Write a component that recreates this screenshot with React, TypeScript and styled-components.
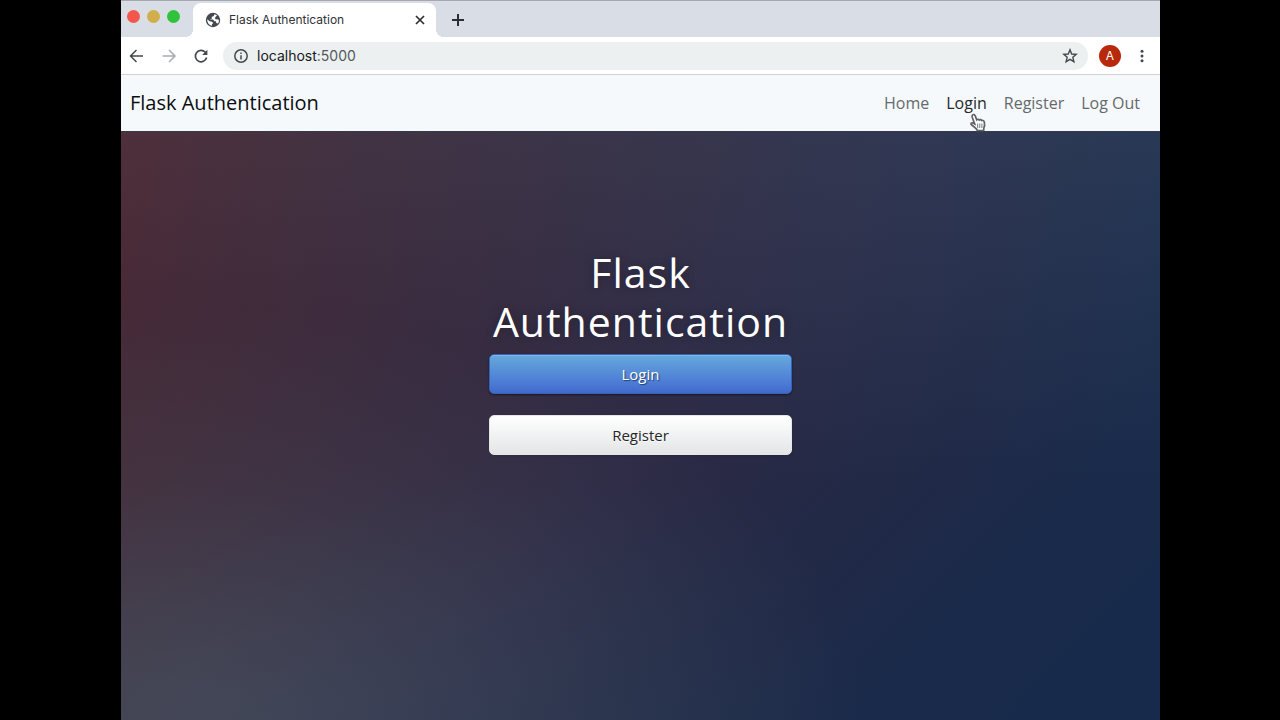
import React from "react";
import styled, { createGlobalStyle } from "styled-components";

const GlobalStyle = createGlobalStyle`
  *, *::before, *::after { box-sizing: border-box; }
  body { margin: 0; background: #000; }
  button { font: inherit; cursor: pointer; }
`;

const Stage = styled.div`
  display: flex;
  min-height: 100vh;
  padding: 0 120px 0 121px;
  background: #000;
`;

const BrowserWindow = styled.div`
  flex: 1;
  min-width: 0;
  display: flex;
  flex-direction: column;
  font-family: Inter, "Liberation Sans", sans-serif;
`;

const TabStrip = styled.div`
  display: flex;
  align-items: flex-end;
  height: 37px;
  background: #d9dde5;
  border-top: 1px solid #a5a8b0;
`;

const WindowControls = styled.div`
  display: flex;
  align-self: flex-start;
  gap: 7px;
  width: 72px;
  padding: 9px 0 0 6px;
`;

const WindowControl = styled.button<{ $color: string }>`
  width: 13px;
  height: 13px;
  padding: 0;
  border: 0;
  border-radius: 50%;
  background: ${(p) => p.$color};
`;

const Tab = styled.div`
  position: relative;
  display: flex;
  align-items: center;
  width: 243px;
  height: 34px;
  padding: 0 8px 0 12px;
  border-radius: 8px 8px 0 0;
  background: #fff;

  &::before,
  &::after {
    content: "";
    position: absolute;
    bottom: 0;
    width: 8px;
    height: 8px;
  }
  &::before {
    right: 100%;
    background: radial-gradient(circle at 0 0, transparent 8px, #fff 8px);
  }
  &::after {
    left: 100%;
    background: radial-gradient(circle at 100% 0, transparent 8px, #fff 8px);
  }
`;

const TabTitle = styled.span`
  flex: 1;
  padding-left: 8px;
  color: #303337;
  font-size: 12px;
  line-height: 16px;
  white-space: nowrap;
`;

const IconButton = styled.button`
  display: flex;
  align-items: center;
  justify-content: center;
  width: 16px;
  height: 16px;
  padding: 0;
  border: 0;
  background: none;
  color: #45484d;
`;

const CloseTabButton = styled(IconButton)`
  color: #2b2e33;
`;

const NewTabButton = styled(CloseTabButton)`
  align-self: center;
  margin: 2px 0 0 14px;
`;

const Toolbar = styled.div`
  display: flex;
  align-items: center;
  height: 38px;
  padding: 0 10px 0 8px;
  background: #fff;
  border-bottom: 1px solid #d0d3d6;
`;

const HistoryButtons = styled.div`
  display: flex;
  gap: 16px;
  margin-right: 14px;
`;

const AddressBar = styled.div`
  flex: 1;
  display: flex;
  align-items: center;
  height: 28px;
  padding: 0 10px;
  border-radius: 14px;
  background: #ecf0f1;
`;

const Address = styled.div`
  flex: 1;
  padding-left: 8px;
  color: #54585c;
  font-size: 14px;
  line-height: 20px;
`;

const Host = styled.span`
  color: #16181b;
`;

const Avatar = styled.button`
  width: 22px;
  height: 22px;
  margin: 0 13px 0 11px;
  padding: 0;
  border: 0;
  border-radius: 50%;
  background: #b7290a;
  color: #fff;
  font-size: 12px;
  line-height: 22px;
`;

const Page = styled.div`
  flex: 1;
  display: flex;
  flex-direction: column;
  font-family: "Open Sans", "Noto Sans", sans-serif;
`;

const Navbar = styled.nav`
  display: flex;
  align-items: center;
  justify-content: space-between;
  height: 56px;
  padding: 0 20px 0 9px;
  background: #f5f9fc;
`;

const Brand = styled.a`
  color: #0c0d0f;
  font-size: 20px;
  line-height: 30px;
  text-decoration: none;
`;

const NavLinks = styled.div`
  display: flex;
  gap: 17px;
`;

const NavLink = styled.a<{ $active?: boolean }>`
  position: relative;
  color: ${(p) => (p.$active ? "#27282a" : "#66696c")};
  font-size: 16px;
  line-height: 24px;
  text-decoration: none;
`;

const Pointer = styled.svg`
  position: absolute;
  top: 22px;
  left: 23px;
  width: 18px;
  height: 20px;
`;

const Hero = styled.main`
  flex: 1;
  display: flex;
  flex-direction: column;
  align-items: center;
  padding: 116px 20px 0;
  border-top: 1px solid #343a4b;
  background:
    radial-gradient(ellipse at 5% 100%, rgba(92, 125, 130, 0.36) 5%, rgba(92, 115, 120, 0) 50%),
    linear-gradient(to bottom, rgba(57, 120, 150, 0.2) 0%, rgba(57, 120, 150, 0) 60%),
    linear-gradient(
      135deg,
      #541d24 0%,
      #44222f 15%,
      #372539 34%,
      #2e2843 50%,
      #222946 67%,
      #1a2a4a 82%,
      #162a4c 100%
    );
`;

const LoginPanel = styled.div`
  display: flex;
  flex-direction: column;
  gap: 21px;
  width: 303px;
`;

const Title = styled.h1`
  margin: 0 0 -13px;
  color: #fff;
  font-size: 41px;
  font-weight: 400;
  line-height: 49px;
  letter-spacing: 1px;
  text-align: center;
  text-shadow: 0 0 10px rgba(0, 0, 0, 0.3);
`;

const PanelButton = styled.button<{ $primary?: boolean }>`
  height: 40px;
  padding: 0;
  border: 1px solid ${(p) => (p.$primary ? "#3762bc" : "#e6e6e6")};
  border-radius: 5px;
  background: ${(p) =>
    p.$primary
      ? "linear-gradient(#66a9dc, #4a77d4 80%, #406ac9)"
      : "linear-gradient(#ffffff, #e3e5e6)"};
  box-shadow: ${(p) =>
    p.$primary
      ? "inset 0 1px 0 rgba(255, 255, 255, 0.2), 0 1px 2px rgba(0, 0, 0, 0.5)"
      : "0 1px 2px rgba(0, 0, 0, 0.1)"};
  color: ${(p) => (p.$primary ? "#fff" : "#262626")};
  font-size: 15px;
  line-height: 20px;
  text-shadow: ${(p) =>
    p.$primary ? "1px 1px 1px rgba(0, 0, 0, 0.5)" : "0 1px 1px rgba(255, 255, 255, 0.75)"};
`;

const GlobeIcon = () => (
  <svg width="16" height="16" viewBox="0 0 16 16" aria-hidden="true">
    <circle cx="8" cy="8" r="7.200" fill="#45494f" />
    <path
      d="M9.400 2.200 8.800 4 6.600 5 7 6.600 4.800 7.600H8.200L9.400 9.200H11L11.200 11 13 11.600A6 6 0 0 0 14 8L12.400 7.200 10.800 7.400 9.800 6 11.200 4.200 12.200 3.800A6 6 0 0 0 9.400 2.200ZM2.200 7.200A6 6 0 0 0 7 13.800V12.200L8.200 11 7 9.800 4.600 9.200Z"
      fill="#fff"
    />
  </svg>
);

const strokeProps = { fill: "none", stroke: "currentColor", strokeWidth: 1.5 };

const App = () => (
  <>
    <GlobalStyle />
    <Stage>
      <BrowserWindow>
        <TabStrip>
          <WindowControls>
            <WindowControl $color="#f2564d" aria-label="Close window" />
            <WindowControl $color="#d0ae4b" aria-label="Minimize window" />
            <WindowControl $color="#2fc33c" aria-label="Zoom window" />
          </WindowControls>
          <Tab>
            <GlobeIcon />
            <TabTitle>Flask Authentication</TabTitle>
            <CloseTabButton aria-label="Close tab">
              <svg width="12" height="12" viewBox="0 0 12 12" {...strokeProps} strokeWidth={1.7}>
                <path d="M2 2 10 10M10 2 2 10" />
              </svg>
            </CloseTabButton>
          </Tab>
          <NewTabButton aria-label="New tab">
            <svg width="14" height="14" viewBox="0 0 14 14" {...strokeProps} strokeWidth={2}>
              <path d="M7 1V13M1 7H13" />
            </svg>
          </NewTabButton>
        </TabStrip>

        <Toolbar>
          <HistoryButtons>
            <IconButton aria-label="Back">
              <svg width="16" height="16" viewBox="0 0 16 16" {...strokeProps}>
                <path d="M14 8H2M7.500 2 1.500 8 7.500 14" />
              </svg>
            </IconButton>
            <IconButton aria-label="Forward" disabled>
              <svg width="16" height="16" viewBox="0 0 16 16" {...strokeProps} stroke="#a9abae">
                <path d="M1.500 8H13.500M8 2 14 8 8 14" />
              </svg>
            </IconButton>
            <IconButton aria-label="Reload">
              <svg width="16" height="16" viewBox="0 0 16 16" {...strokeProps} strokeWidth={1.7}>
                <path d="M13.600 9.500A5.700 5.700 0 1 1 12.300 4.200L13.500 5.400" />
                <path d="M14.400 1.800V7H9.200Z" fill="currentColor" stroke="none" />
              </svg>
            </IconButton>
          </HistoryButtons>
          <AddressBar>
            <IconButton aria-label="View site information">
              <svg width="16" height="16" viewBox="0 0 16 16" {...strokeProps}>
                <circle cx="8" cy="8" r="6.200" />
                <path d="M8 7.200V11.500M8 4.500V6" />
              </svg>
            </IconButton>
            <Address>
              <Host>localhost</Host>:5000
            </Address>
            <IconButton aria-label="Bookmark this page">
              <svg width="16" height="16" viewBox="0 0 16 16" {...strokeProps}>
                <path
                  d="M8 1.800 9.700 6 14.200 6.400 10.800 9.300 11.900 13.700 8 11.300 4.100 13.700 5.200 9.300 1.800 6.400 6.300 6Z"
                  strokeWidth="1.400"
                />
              </svg>
            </IconButton>
          </AddressBar>
          <Avatar aria-label="Profile">A</Avatar>
          <IconButton aria-label="Menu">
            <svg width="16" height="16" viewBox="0 0 16 16" fill="currentColor">
              <circle cx="8" cy="3.200" r="1.500" />
              <circle cx="8" cy="8" r="1.500" />
              <circle cx="8" cy="12.800" r="1.500" />
            </svg>
          </IconButton>
        </Toolbar>

        <Page>
          <Navbar>
            <Brand href="#home">Flask Authentication</Brand>
            <NavLinks>
              <NavLink href="#home">Home</NavLink>
              <NavLink href="#login" $active>
                Login
                <Pointer viewBox="0 0 18 20" aria-hidden="true">
                  <path
                    d="M3.500 2C4.500 1 5.700 1.600 6.200 2.800L7.800 6.800C8.500 6 9.700 6.100 10.200 7 11 6.300 12.200 6.600 12.600 7.500 14 7 15 7.800 15.300 9 15.800 11.300 15.900 13.200 14.800 15.200L14.700 17.500H8.200L7.800 16.300C6.200 14.800 4.500 13.300 2.500 11.800 1.300 10.800 2.300 9.300 3.900 10L5.700 11 3.200 4.300C2.900 3.400 2.900 2.600 3.500 2Z"
                    fill="#fff"
                    stroke="#606266"
                    strokeWidth="1.700"
                  />
                  <path d="M8.700 10.500V15M10.800 10.500V15M12.900 10.500V15" stroke="#77787b" />
                </Pointer>
              </NavLink>
              <NavLink href="#register">Register</NavLink>
              <NavLink href="#logout">Log Out</NavLink>
            </NavLinks>
          </Navbar>
          <Hero>
            <LoginPanel>
              <Title>Flask Authentication</Title>
              <PanelButton $primary>Login</PanelButton>
              <PanelButton>Register</PanelButton>
            </LoginPanel>
          </Hero>
        </Page>
      </BrowserWindow>
    </Stage>
  </>
);

export default App;
